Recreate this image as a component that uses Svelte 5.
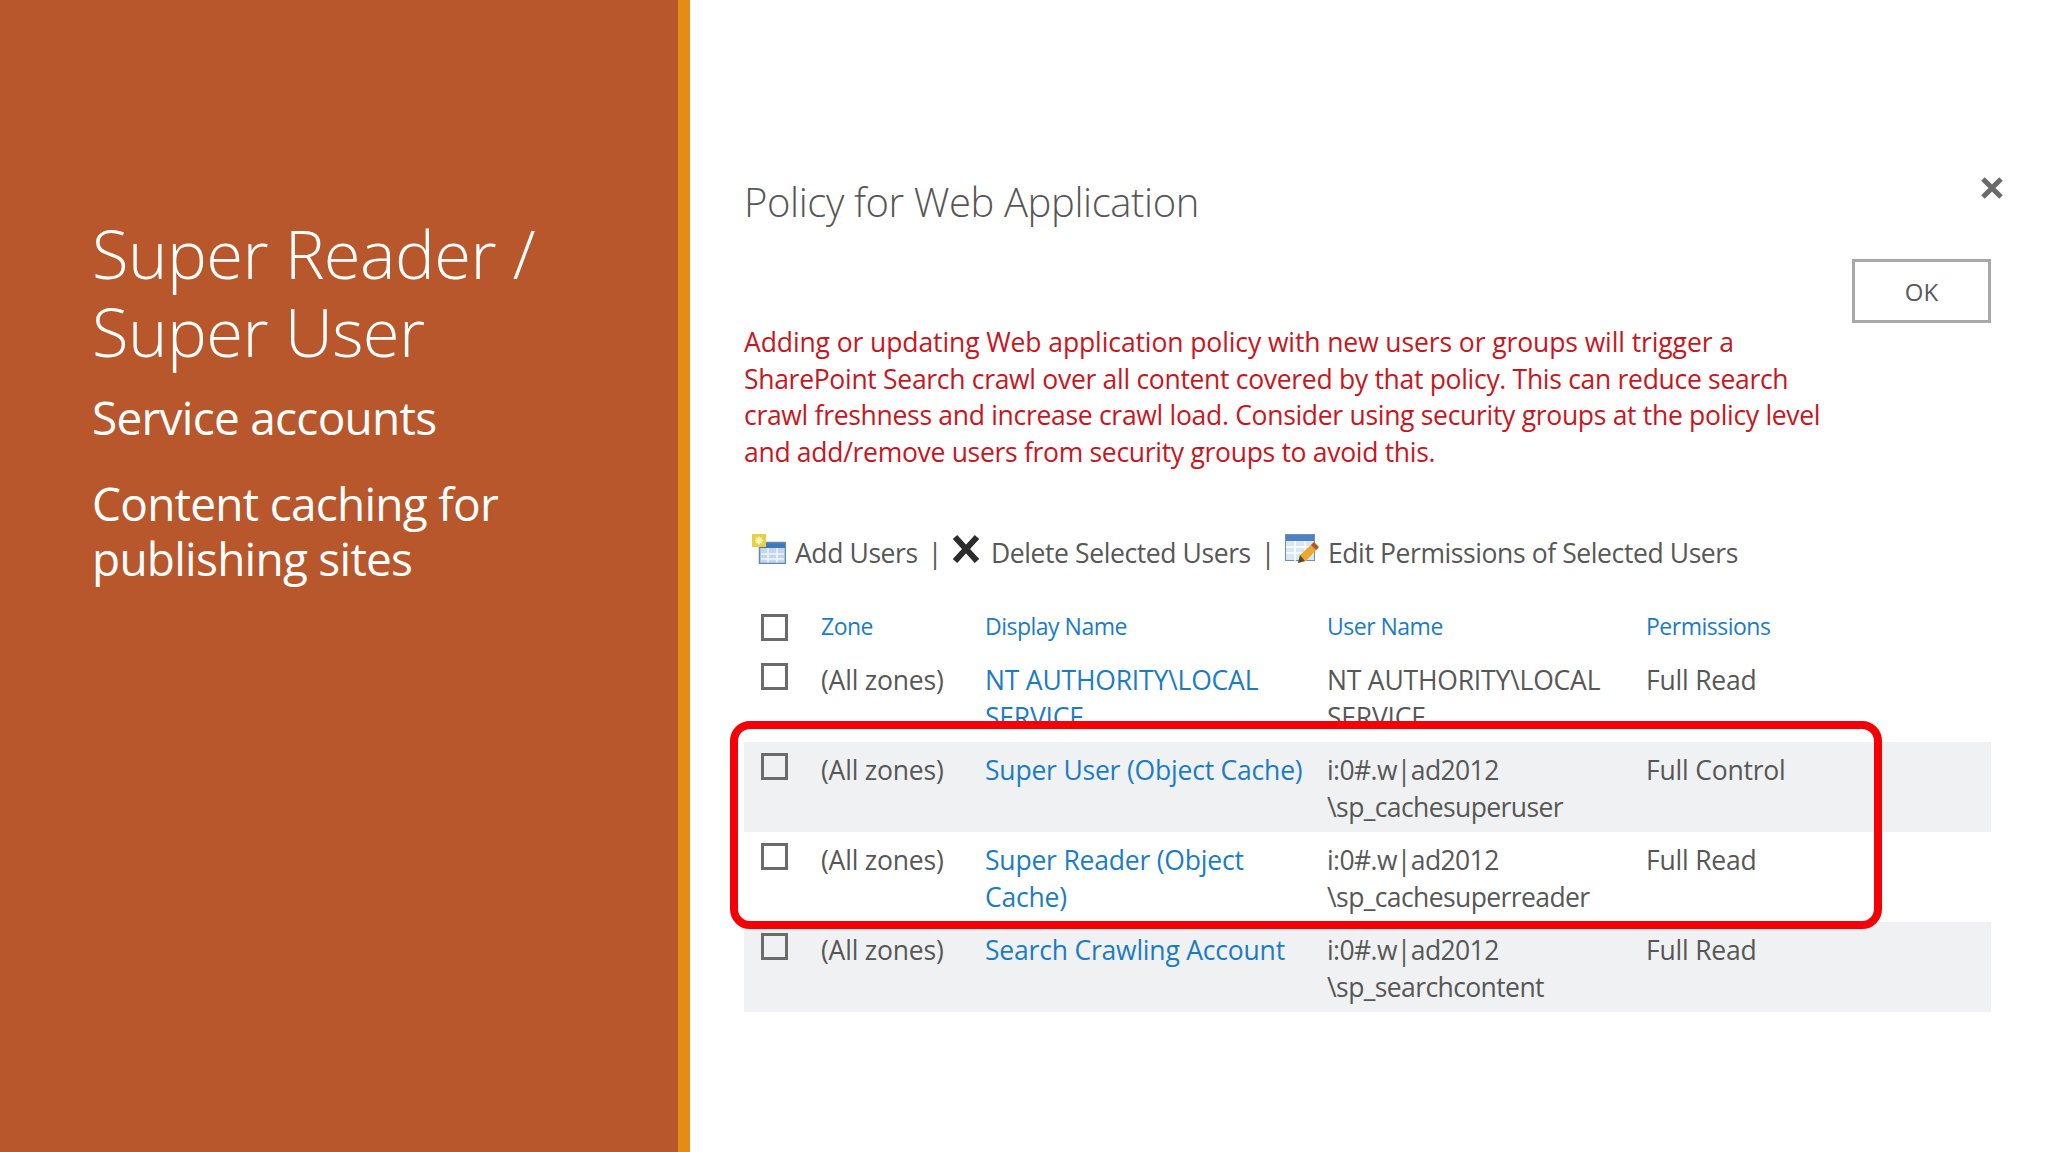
<script lang="ts">
  const columns = ["Zone", "Display Name", "User Name", "Permissions"];

  const rows = [
    { name: ["NT AUTHORITY\\LOCAL", "SERVICE"], user: ["NT AUTHORITY\\LOCAL", "SERVICE"], perm: "Full Read", shaded: false, clipped: true },
    { name: ["Super User (Object Cache)"], user: ["i:0#.w|ad2012", "\\sp_cachesuperuser"], perm: "Full Control", shaded: true, clipped: false },
    { name: ["Super Reader (Object", "Cache)"], user: ["i:0#.w|ad2012", "\\sp_cachesuperreader"], perm: "Full Read", shaded: false, clipped: false },
    { name: ["Search Crawling Account"], user: ["i:0#.w|ad2012", "\\sp_searchcontent"], perm: "Full Read", shaded: true, clipped: false },
  ];
</script>

<div class="slide">
  <aside class="side">
    <h1>Super Reader /<br />Super User</h1>
    <p class="first">Service accounts</p>
    <p>Content caching for<br />publishing sites</p>
  </aside>

  <main class="panel">
    <header class="head">
      <h2>Policy for Web Application</h2>
      <svg class="close" viewBox="0 0 24 24" aria-label="Close">
        <path d="M3 3 21 21M21 3 3 21" stroke="#6a6a6a" stroke-width="5" />
      </svg>
    </header>

    <div class="ok-row"><button class="ok">OK</button></div>

    <p class="warning">
      Adding or updating Web application policy with new users or groups will trigger a<br />
      SharePoint Search crawl over all content covered by that policy. This can reduce search<br />
      crawl freshness and increase crawl load. Consider using security groups at the policy level<br />
      and add/remove users from security groups to avoid this.
    </p>

    <div class="toolbar">
      <svg class="ic-add" viewBox="0 0 34 30">
        <rect x="7" y="8" width="27" height="22" fill="#c3d6ec" />
        <rect x="7" y="8" width="27" height="6" fill="#3f78b8" />
        <path d="M9 20H32M9 25H32M16 14V29M25 14V29" stroke="#f1f6fb" stroke-width="1.5" />
        <rect x="7.500" y="8.500" width="26" height="21" fill="none" stroke="#5f88b5" stroke-width="1.500" />
        <rect x="0" y="0" width="14" height="13" fill="#e6d045" />
        <path d="M7 2.500V10.500M3 6.500H11M4.300 3.800 9.700 9.200M9.700 3.800 4.300 9.200" stroke="#fff7c0" stroke-width="1.500" />
      </svg>
      <span class="add">Add Users</span>
      <span class="sep">|</span>
      <svg class="ic-del" viewBox="0 0 28 30">
        <path d="M3 3 25 27M25 3 3 27" stroke="#2b2b2b" stroke-width="6" />
      </svg>
      <span class="del">Delete Selected Users</span>
      <span class="sep">|</span>
      <svg class="ic-edit" viewBox="0 0 34 30">
        <rect x="0.500" y="0.500" width="29" height="26" fill="#dbe6f3" stroke="#6a8fbd" />
        <rect x="1" y="1" width="28" height="6" fill="#4f80c0" />
        <path d="M1 13H29M1 19H29M10 7V27M20 7V27" stroke="#fff" stroke-width="1.500" />
        <path d="M13 29 15 21 28 9 33 14 21 27Z" fill="#e8a92e" />
        <path d="M13 29 15 21 20 27Z" fill="#5b4a2a" />
        <path d="M26 11 31 16 34 13 29 8Z" fill="#b5562c" />
      </svg>
      <span>Edit Permissions of Selected Users</span>
    </div>

    <div class="table">
      <div class="row header">
        <span class="check"></span>
        {#each columns as col}
          <span class="link">{col}</span>
        {/each}
      </div>

      {#each rows as row}
        <div class="row body" class:shaded={row.shaded} class:clipped={row.clipped}>
          <span class="check"></span>
          <span>(All zones)</span>
          <span class="link">
            {#each row.name as line}<span class="line">{line}</span>{/each}
          </span>
          <span class:tight={!row.clipped}>
            {#each row.user as line}<span class="line">{line}</span>{/each}
          </span>
          <span>{row.perm}</span>
        </div>
      {/each}

      <div class="highlight"></div>
    </div>
  </main>
</div>

<style>
  :global(body) {
    margin: 0;
    background: #fff;
  }

  .slide {
    display: grid;
    grid-template-columns: 678px 12px 1fr;
    width: 2048px;
    height: 1152px;
    overflow: hidden;
    font-family: "Open Sans", "Noto Sans", sans-serif;
    background: linear-gradient(90deg, #b7572b 678px, #e48d15 678px, #e48d15 690px, #fff 690px);
  }

  .side {
    padding: 214px 30px 0 92px;
    color: #fff;
  }

  .side h1 {
    margin: 0;
    font-size: 67px;
    font-weight: 300;
    line-height: 78px;
    letter-spacing: -0.6px;
  }

  .side p {
    margin: 0 0 31px;
    font-size: 46px;
    font-weight: 400;
    line-height: 55px;
    letter-spacing: -0.75px;
  }

  .side p.first {
    margin-top: 20px;
  }

  .panel {
    grid-column: 3;
    padding: 170px 57px 0 54px;
    color: #575757;
  }

  .head {
    display: flex;
    justify-content: space-between;
    align-items: flex-start;
  }

  .head h2 {
    margin: 0;
    font-size: 40px;
    font-weight: 300;
    line-height: 64px;
    letter-spacing: -0.4px;
  }

  .close {
    width: 24px;
    height: 24px;
    margin: 6px -13px 0 0;
    filter: blur(0.4px);
  }

  .ok-row {
    display: flex;
    justify-content: flex-end;
    margin-top: 25px;
  }

  .ok {
    width: 139px;
    height: 64px;
    border: 3px solid #a8a8a8;
    background: #fff;
    color: #5a5a5a;
    font: 400 24px "Open Sans", sans-serif;
  }

  .warning {
    margin: 1px 0 0;
    color: #c8161e;
    font-size: 26.500px;
    line-height: 36.600px;
    letter-spacing: -0.3px;
    white-space: nowrap;
  }

  .warning::first-line {
    letter-spacing: -0.1px;
  }

  .toolbar {
    display: flex;
    align-items: center;
    margin: 66px 0 0 8px;
    height: 34px;
    font-size: 26.500px;
    letter-spacing: -0.4px;
    white-space: nowrap;
  }

  .toolbar svg {
    flex: none;
    margin-top: -8px;
    filter: blur(0.6px);
  }

  .ic-add {
    width: 34px;
    height: 30px;
  }

  .ic-del {
    width: 28px;
    height: 30px;
  }

  .ic-edit {
    width: 34px;
    height: 30px;
  }

  .add {
    margin-left: 9px;
  }

  .del {
    margin-left: 11px;
  }

  .ic-edit + span {
    margin-left: 9px;
  }

  .sep {
    margin: 0 10px;
  }

  .table {
    position: relative;
    margin-top: 30px;
    font-size: 26.500px;
    letter-spacing: -0.2px;
  }

  .row {
    display: grid;
    grid-template-columns: 77px 164px 342px 319px 1fr;
  }

  .row.header {
    height: 52px;
    align-items: center;
    font-size: 23px;
    letter-spacing: -0.5px;
  }

  .row.body {
    height: 90px;
    line-height: 36.600px;
    padding-top: 10px;
    box-sizing: border-box;
    white-space: nowrap;
  }

  .row.clipped {
    height: 72px;
    margin-bottom: 18px;
    overflow: hidden;
  }

  .shaded {
    background: #f0f1f2;
  }

  .line {
    display: block;
  }

  .tight {
    letter-spacing: -0.6px;
  }

  .link {
    color: #1b7cc4;
  }

  .check {
    box-sizing: border-box;
    width: 27px;
    height: 27px;
    margin: 1px 0 0 17px;
    border: 3px solid #6b6b6b;
  }

  .header .check {
    margin-top: 2px;
  }

  .highlight {
    position: absolute;
    left: -14px;
    top: 121px;
    width: 1152px;
    height: 208px;
    box-sizing: border-box;
    border: 8px solid #f40006;
    border-radius: 20px;
    pointer-events: none;
  }
</style>
